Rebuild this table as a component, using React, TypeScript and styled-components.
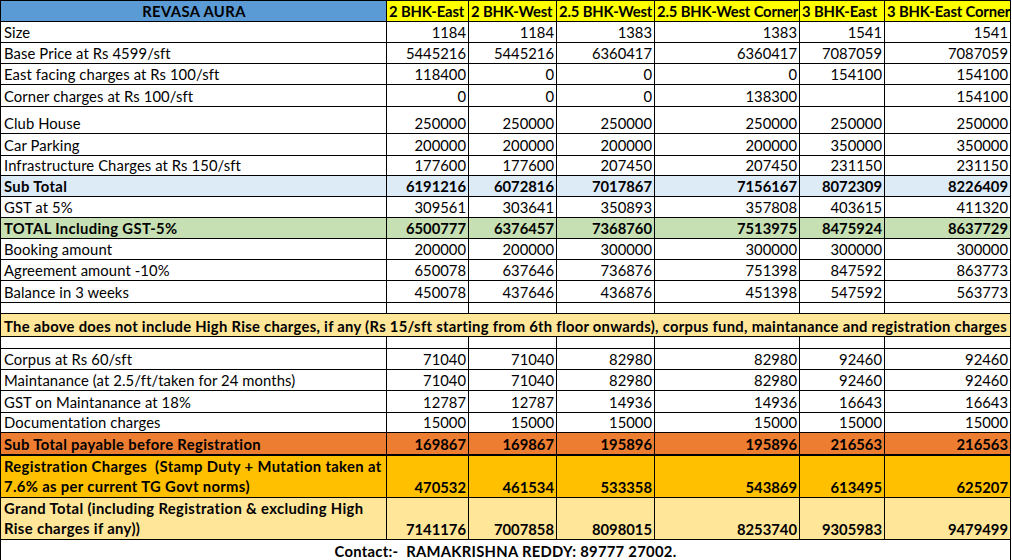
import React from 'react';
import styled, { createGlobalStyle } from 'styled-components';

type Tone = 'plain' | 'head' | 'sub' | 'total' | 'note' | 'payable' | 'reg' | 'grand';

const tones: Record<Tone, string> = {
  plain: '#ffffff',
  head: '#ffff00',
  sub: '#ddebf7',
  total: '#c6e0b4',
  note: '#ffe699',
  payable: '#ed7d31',
  reg: '#ffc000',
  grand: '#ffe699',
};

interface Line {
  label: string;
  values: (number | null)[];
  h: number;
  tone?: Tone;
  bold?: boolean;
}

const units = ['2 BHK-East', '2 BHK-West', '2.5 BHK-West', '2.5 BHK-West Corner', '3 BHK-East', '3 BHK-East Corner'];
const widths = [386, 82, 88, 98, 145, 85, 126];

const top: Line[] = [
  { label: 'Size', values: [1184, 1184, 1383, 1383, 1541, 1541], h: 21 },
  { label: 'Base Price at Rs 4599/sft', values: [5445216, 5445216, 6360417, 6360417, 7087059, 7087059], h: 21 },
  { label: 'East facing charges at Rs 100/sft', values: [118400, 0, 0, 0, 154100, 154100], h: 21 },
  { label: 'Corner charges at Rs 100/sft', values: [0, 0, 0, 138300, null, 154100], h: 22 },
  { label: 'Club House', values: [250000, 250000, 250000, 250000, 250000, 250000], h: 27 },
  { label: 'Car Parking', values: [200000, 200000, 200000, 200000, 350000, 350000], h: 22 },
  { label: 'Infrastructure Charges at Rs 150/sft', values: [177600, 177600, 207450, 207450, 231150, 231150], h: 20 },
  { label: 'Sub Total', values: [6191216, 6072816, 7017867, 7156167, 8072309, 8226409], h: 21, tone: 'sub', bold: true },
  { label: 'GST at 5%', values: [309561, 303641, 350893, 357808, 403615, 411320], h: 21 },
  { label: 'TOTAL Including GST-5%', values: [6500777, 6376457, 7368760, 7513975, 8475924, 8637729], h: 21, tone: 'total', bold: true },
  { label: 'Booking amount', values: [200000, 200000, 300000, 300000, 300000, 300000], h: 21 },
  { label: 'Agreement amount -10%', values: [650078, 637646, 736876, 751398, 847592, 863773], h: 21 },
  { label: 'Balance in 3 weeks', values: [450078, 437646, 436876, 451398, 547592, 563773], h: 22 },
];

const bottom: Line[] = [
  { label: 'Corpus at Rs 60/sft', values: [71040, 71040, 82980, 82980, 92460, 92460], h: 21 },
  { label: 'Maintanance (at 2.5/ft/taken for 24 months)', values: [71040, 71040, 82980, 82980, 92460, 92460], h: 21 },
  { label: 'GST on Maintanance at 18%', values: [12787, 12787, 14936, 14936, 16643, 16643], h: 22 },
  { label: 'Documentation charges', values: [15000, 15000, 15000, 15000, 15000, 15000], h: 20 },
  { label: 'Sub Total payable before Registration', values: [169867, 169867, 195896, 195896, 216563, 216563], h: 22, tone: 'payable', bold: true },
  { label: 'Registration Charges\u00a0 (Stamp Duty + Mutation taken at 7.6% as per current TG Govt norms)', values: [470532, 461534, 533358, 543869, 613495, 625207], h: 42, tone: 'reg', bold: true },
  { label: 'Grand Total (including Registration & excluding High Rise charges if any))', values: [7141176, 7007858, 8098015, 8253740, 9305983, 9479499], h: 42, tone: 'grand', bold: true },
];

const GlobalStyle = createGlobalStyle`
  html, body {
    margin: 0;
    padding: 0;
    background: #ffffff;
  }
  body {
    font-family: Lato, "Open Sans", sans-serif;
    color: #000000;
  }
`;

const Sheet = styled.table`
  width: 1011px;
  table-layout: fixed;
  border-collapse: collapse;
  font-size: 14.8px;
  line-height: 17px;
`;

const Row = styled.tr<{ $h: number; $tone: Tone; $thick?: boolean }>`
  height: ${({ $h }) => $h}px;
  background: ${({ $tone }) => tones[$tone]};
  ${({ $thick }) => ($thick ? 'border-bottom: 2px solid #000;' : '')}
`;

const Cell = styled.td<{ $align?: 'left' | 'right' | 'center'; $bold?: boolean }>`
  border: 1px solid #000;
  padding: 0 2px 1px 3px;
  vertical-align: bottom;
  text-align: ${({ $align }) => $align || 'right'};
  font-weight: ${({ $bold }) => ($bold ? 700 : 400)};
  white-space: nowrap;
  overflow: hidden;
`;

const LabelCell = styled(Cell)<{ $tall?: boolean }>`
  white-space: normal;
  text-align: left;
  line-height: ${({ $tall }) => ($tall ? '20px' : '17px')};
  padding-right: 0;
  letter-spacing: ${({ $bold }) => ($bold ? '0.35px' : '0.1px')};
`;

const TitleCell = styled(Cell)`
  background: #5b9bd5;
  text-align: center;
  font-weight: 700;
  letter-spacing: 0.4px;
`;

const HeadCell = styled(Cell)`
  text-align: left;
  font-weight: 700;
  padding-left: 2px;
  padding-right: 0;
  letter-spacing: -0.15px;
  text-overflow: clip;
`;

const SpanCell = styled.td<{ $center?: boolean }>`
  border: 1px solid #000;
  padding: 0 3px 1px;
  vertical-align: bottom;
  font-weight: 700;
  letter-spacing: 0.28px;
  white-space: nowrap;
  overflow: hidden;
  text-align: ${({ $center }) => ($center ? 'center' : 'left')};
`;

const DataRow = ({ line }: { line: Line }) => (
  <Row $h={line.h} $tone={line.tone || 'plain'} $thick={line.tone === 'payable'}>
    <LabelCell $bold={line.bold} $tall={line.h > 30}>
      {line.label}
    </LabelCell>
    {line.values.map((v, i) => (
      <Cell key={i} $bold={line.bold}>
        {v === null ? '' : v}
      </Cell>
    ))}
  </Row>
);

const BlankRow = ({ h }: { h: number }) => (
  <Row $h={h} $tone="plain">
    {widths.map((_, i) => (
      <Cell key={i} />
    ))}
  </Row>
);

const App = () => {
  return (
    <>
      <GlobalStyle />
      <Sheet>
        <colgroup>
          {widths.map((w, i) => (
            <col key={i} style={{ width: w }} />
          ))}
        </colgroup>
        <tbody>
          <Row $h={21} $tone="head">
            <TitleCell>REVASA AURA</TitleCell>
            {units.map((u) => (
              <HeadCell key={u}>{u}</HeadCell>
            ))}
          </Row>
          {top.map((line) => (
            <DataRow key={line.label} line={line} />
          ))}
          <BlankRow h={11} />
          <Row $h={23} $tone="note">
            <SpanCell colSpan={7}>
              The above does not include High Rise charges, if any (Rs 15/sft starting from 6th floor onwards), corpus fund, maintanance and registration charges
            </SpanCell>
          </Row>
          <BlankRow h={12} />
          {bottom.map((line) => (
            <DataRow key={line.label} line={line} />
          ))}
          <Row $h={22} $tone="plain">
            <SpanCell colSpan={7} $center>
              Contact:-&nbsp; RAMAKRISHNA REDDY: 89777 27002.
            </SpanCell>
          </Row>
        </tbody>
      </Sheet>
    </>
  );
};

export default App;
